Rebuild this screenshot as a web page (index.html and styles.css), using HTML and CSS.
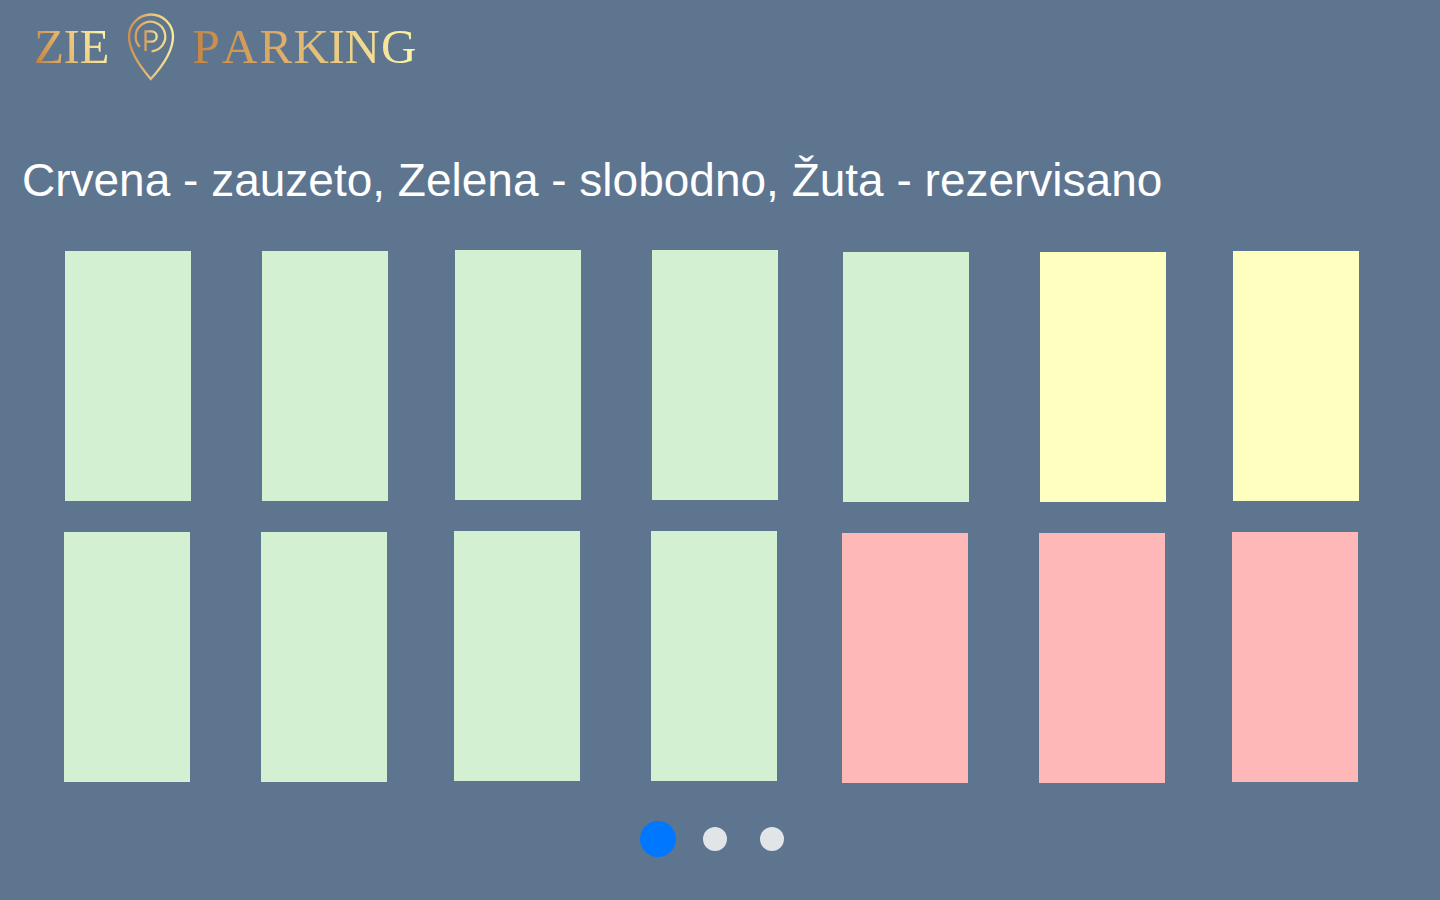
FILE: index.html
```
<!DOCTYPE html>
<html lang="sr-Latn">
<head>
<meta charset="utf-8">
<title>ZIE Parking</title>
<link rel="stylesheet" href="styles.css">
</head>
<body>
<header class="header">
<svg class="logo" width="400" height="90" viewBox="20 0 400 90" role="img" aria-label="ZIE PARKING">
<defs>
<linearGradient id="gold-zie" gradientUnits="userSpaceOnUse" x1="38" y1="62" x2="104" y2="36"><stop offset="0" stop-color="#c68643"/><stop offset=".5" stop-color="#e9c078"/><stop offset="1" stop-color="#fdf3a6"/></linearGradient>
<linearGradient id="gold-pin" gradientUnits="userSpaceOnUse" x1="128" y1="46" x2="174" y2="46"><stop offset="0" stop-color="#cf8f4c"/><stop offset=".5" stop-color="#e9c078"/><stop offset="1" stop-color="#fbec9e"/></linearGradient>
<linearGradient id="gold-parking" gradientUnits="userSpaceOnUse" x1="195" y1="46" x2="414" y2="46"><stop offset="0" stop-color="#c68643"/><stop offset=".5" stop-color="#e3b973"/><stop offset="1" stop-color="#fdf3a6"/></linearGradient>
<linearGradient id="gold-letter" gradientUnits="userSpaceOnUse" x1="143" y1="40" x2="159" y2="40"><stop offset="0" stop-color="#d2955a"/><stop offset="1" stop-color="#fbec9e"/></linearGradient>
</defs>
<text class="logo-text" x="34 63.500 79.500" y="63" fill="url(#gold-zie)">ZIE</text>
<g fill="none" stroke="url(#gold-pin)" stroke-width="2.300">
<path d="M150.800 79C143 70 129 52 129 36.500A22 22 0 0 1 173 36.500C173 52 159 70 150.800 79Z"/>
<path d="M139.800 46.800A14.800 14.800 0 1 1 151.500 51.300"/>
</g>
<path d="M145.500 51V31.300H151.500A5.200 5.200 0 0 1 151.500 41.700H146" fill="none" stroke="url(#gold-letter)" stroke-width="2.300"/>
<text class="logo-text" x="192.500 222 259.500 293.500 328.500 344.500 381" y="63" fill="url(#gold-parking)">PARKING</text>
</svg>
</header>
<main>
<h1 class="legend">Crvena - zauzeto, Zelena - slobodno, Žuta - rezervisano</h1>
<section class="lot">
<div class="row">
<div class="spot free drop-1"></div><div class="spot free drop-1"></div><div class="spot free"></div><div class="spot free"></div><div class="spot free drop-2"></div><div class="spot reserved drop-2"></div><div class="spot reserved drop-1"></div>
</div>
<div class="row row-lower">
<div class="spot free drop-1"></div><div class="spot free drop-1"></div><div class="spot free"></div><div class="spot free"></div><div class="spot taken drop-2"></div><div class="spot taken drop-2"></div><div class="spot taken drop-1"></div>
</div>
</section>
<nav class="pager"><span class="dot dot-active"></span><span class="dot"></span><span class="dot"></span></nav>
</main>
</body>
</html>
```
FILE: styles.css
```
* { box-sizing: border-box; }
body { margin: 0; height: 900px; overflow: hidden; background: #5e7590; font-family: "Liberation Sans", Arial, sans-serif; }
.header { height: 90px; padding-left: 20px; }
.logo { display: block; }
.logo-text { font-family: "Liberation Serif", "Times New Roman", serif; font-size: 49px; }
.legend { margin: 63px 0 0 22px; height: 55px; color: #fff; font-size: 46px; font-weight: 400; line-height: 55px; white-space: nowrap; }
.lot { display: flex; flex-direction: column; gap: 29px; padding: 42px 0 0 65px; }
.row { display: grid; grid-template-columns: 197px 193px 197px 191px 197px 193px 126px; height: 252px; }
.row-lower { margin-left: -1px; }
.spot { width: 126px; height: 250px; }
.drop-1 { margin-top: 1px; }
.drop-2 { margin-top: 2px; }
.free { background: #d3f0d2; }
.reserved { background: #ffffc0; }
.taken { background: #fdb8b7; }
.pager { display: flex; align-items: center; height: 36px; margin: 38px 0 0 640px; }
.dot { width: 24px; height: 24px; border-radius: 50%; background: #e1e5e8; margin-right: 33px; }
.dot-active { width: 36px; height: 36px; background: #0077ff; margin-right: 27px; }
```
